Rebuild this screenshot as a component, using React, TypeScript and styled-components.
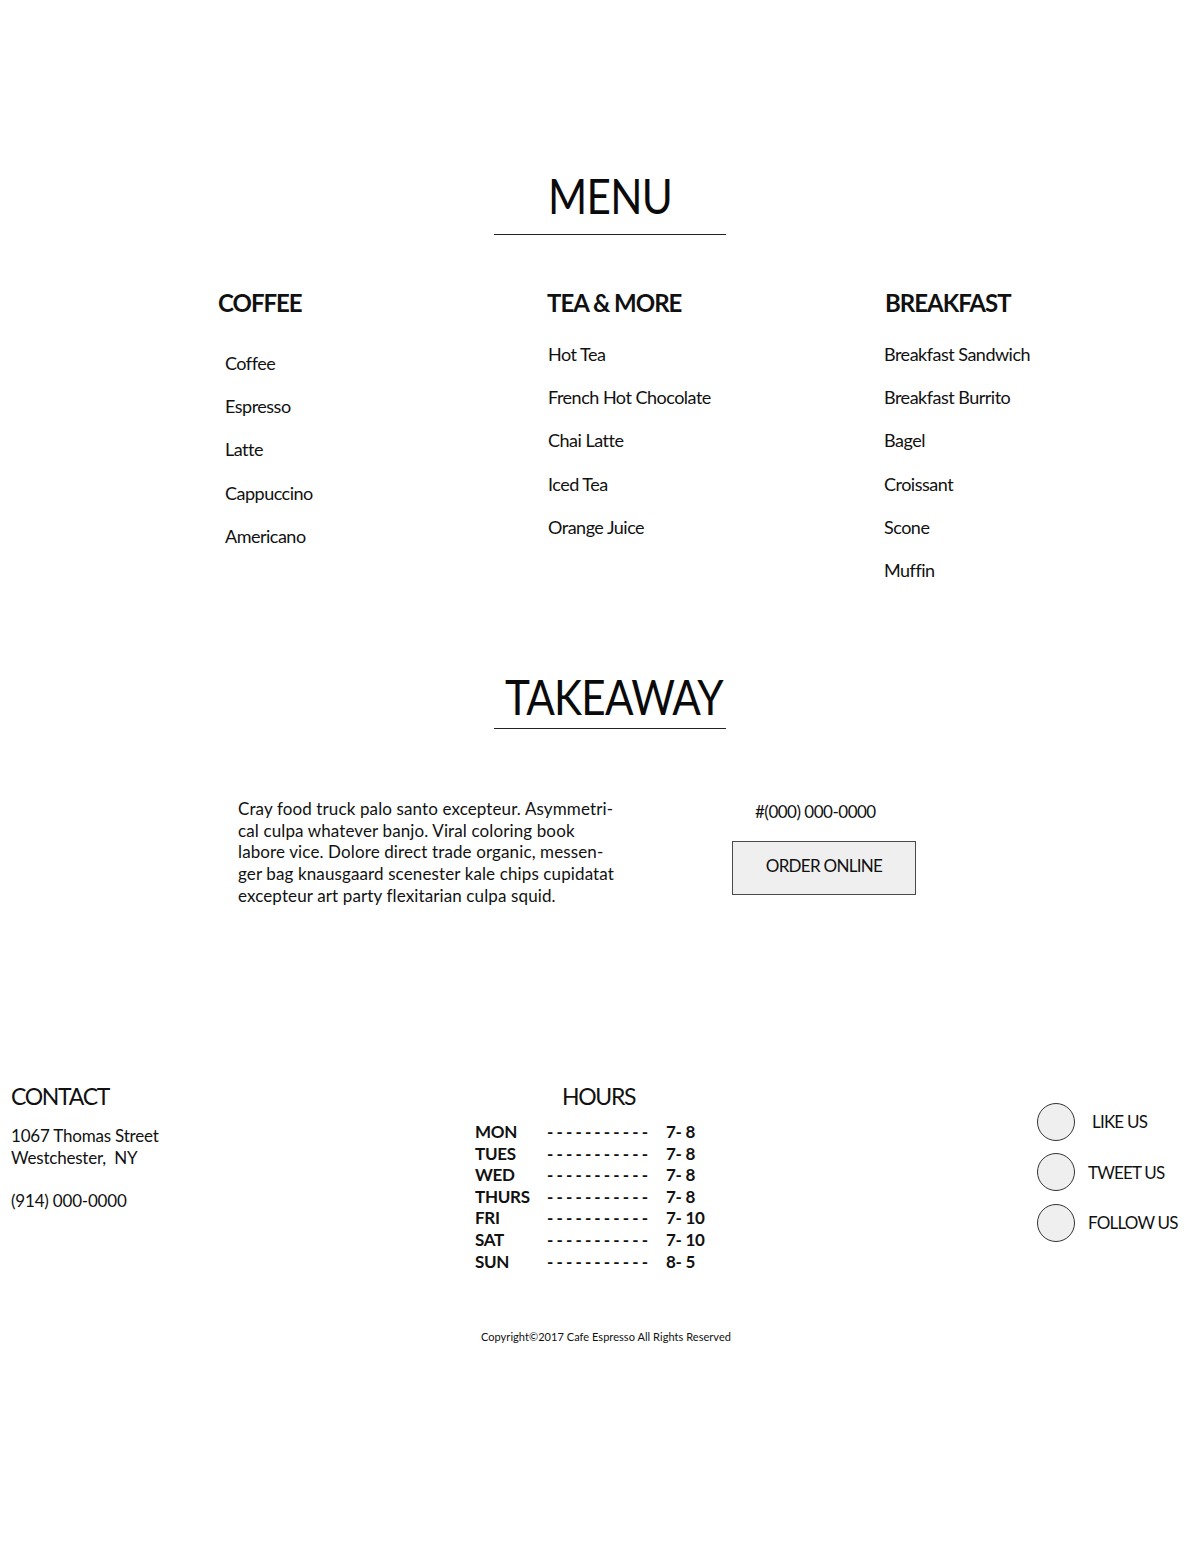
import React from 'react';
import styled, { createGlobalStyle } from 'styled-components';

const GlobalStyle = createGlobalStyle`
  html, body {
    margin: 0;
    padding: 0;
    background: #ffffff;
  }
  body {
    font-family: Lato, "Open Sans", sans-serif;
    color: #111111;
  }
`;

const Page = styled.div`
  width: 1200px;
  min-height: 1546px;
  padding-top: 172px;
  box-sizing: border-box;
  display: flex;
  flex-direction: column;
`;

const TitleBlock = styled.div<{ $top?: number }>`
  margin-left: 494px;
  width: 232px;
  margin-top: ${(p) => p.$top ?? 0}px;
  display: flex;
  flex-direction: column;
`;

// the original face is narrower than Lato, so the big titles get squeezed a bit
const Title = styled.h2<{ $shift?: number }>`
  margin: 0;
  font-size: 48px;
  line-height: 48px;
  font-weight: 400;
  text-align: center;
  letter-spacing: -0.8px;
  color: #0a0a0a;
  transform: translateX(${(p) => p.$shift ?? 0}px) scaleX(0.88);
  white-space: nowrap;
`;

const Rule = styled.div<{ $gap: number }>`
  margin-top: ${(p) => p.$gap}px;
  height: 1px;
  background: #222;
`;

const MenuGrid = styled.div`
  margin-top: 56px;
  padding-left: 218px;
  display: grid;
  grid-template-columns: 329px 338px 1fr;
`;

const Category = styled.div`
  display: flex;
  flex-direction: column;
`;

const CategoryName = styled.h3`
  margin: 0;
  font-size: 24px;
  line-height: 24px;
  font-weight: 700;
  letter-spacing: -1px;
`;

const ItemList = styled.ul<{ $offset: number; $indent: number }>`
  list-style: none;
  margin: ${(p) => p.$offset}px 0 0 ${(p) => p.$indent}px;
  padding: 0;
  display: flex;
  flex-direction: column;
  gap: 25.2px;
`;

const Item = styled.li`
  font-size: 18px;
  line-height: 18px;
  letter-spacing: -0.5px;
`;

const TakeawayBody = styled.div`
  margin-top: 69px;
  padding-left: 238px;
  display: grid;
  grid-template-columns: 494px 184px;
`;

const Blurb = styled.p`
  margin: 0;
  font-size: 17px;
  line-height: 21.75px;
  letter-spacing: 0.12px;
  white-space: nowrap;
`;

const OrderBox = styled.div`
  display: flex;
  flex-direction: column;
  padding-top: 3px;
`;

const Phone = styled.div`
  padding-left: 23px;
  font-size: 17px;
  line-height: 21.75px;
  letter-spacing: -0.5px;
`;

const OrderButton = styled.button`
  margin-top: 18px;
  width: 184px;
  height: 54px;
  box-sizing: border-box;
  border: 1px solid #4a4a4a;
  background: #efefef;
  font-family: Lato, sans-serif;
  font-size: 17px;
  letter-spacing: -0.7px;
  color: #111;
  padding: 0 0 5px;
  cursor: pointer;
`;

const Footer = styled.footer`
  margin-top: 178px;
  padding-left: 11px;
  display: grid;
  grid-template-columns: 464px 562px 1fr;
`;

const FooterHeading = styled.h4<{ $indent?: number }>`
  margin: 0 0 0 ${(p) => p.$indent ?? 0}px;
  font-size: 23px;
  line-height: 23px;
  font-weight: 400;
  letter-spacing: -1.3px;
`;

const ContactLines = styled.div<{ $gap: number }>`
  margin-top: ${(p) => p.$gap}px;
  font-size: 17px;
  line-height: 22px;
  letter-spacing: -0.2px;
`;

const HoursTable = styled.div`
  margin-top: 13px;
  display: grid;
  grid-template-columns: 72px 119px auto;
  grid-auto-rows: 21.6px;
  align-items: center;
  font-size: 17px;
  font-weight: 700;
  letter-spacing: -0.3px;
`;

const Dashes = styled.span`
  letter-spacing: -0.5px;
  white-space: nowrap;
`;

const Social = styled.div`
  padding-top: 18px;
  display: flex;
  flex-direction: column;
  gap: 12.5px;
`;

const SocialRow = styled.div`
  display: flex;
  align-items: center;
`;

const Circle = styled.span`
  width: 38px;
  height: 38px;
  box-sizing: border-box;
  border-radius: 50%;
  border: 1px solid #333;
  background: #efefef;
  flex-shrink: 0;
`;

const SocialLabel = styled.span<{ $gap: number }>`
  margin-left: ${(p) => p.$gap}px;
  font-size: 17px;
  letter-spacing: -0.8px;
  white-space: nowrap;
`;

const Copyright = styled.div`
  margin-top: 59px;
  text-align: center;
  font-size: 11px;
  line-height: 11px;
  padding-left: 12px;
  letter-spacing: 0.05px;
`;

const menu = [
  { name: 'COFFEE', offset: 39, indent: 7, items: ['Coffee', 'Espresso', 'Latte', 'Cappuccino', 'Americano'] },
  { name: 'TEA & MORE', offset: 30, indent: 1, items: ['Hot Tea', 'French Hot Chocolate', 'Chai Latte', 'Iced Tea', 'Orange Juice'] },
  {
    name: 'BREAKFAST',
    offset: 30,
    indent: -1,
    items: ['Breakfast Sandwich', 'Breakfast Burrito', 'Bagel', 'Croissant', 'Scone', 'Muffin'],
  },
];

const hours = [
  ['MON', '7- 8'],
  ['TUES', '7- 8'],
  ['WED', '7- 8'],
  ['THURS', '7- 8'],
  ['FRI', '7- 10'],
  ['SAT', '7- 10'],
  ['SUN', '8- 5'],
];

const social = [
  { label: 'LIKE US', gap: 17 },
  { label: 'TWEET US', gap: 13 },
  { label: 'FOLLOW US', gap: 13 },
];

const App: React.FC = () => {
  return (
    <Page>
      <GlobalStyle />
      <TitleBlock>
        <Title>MENU</Title>
        <Rule $gap={14} />
      </TitleBlock>

      <MenuGrid>
        {menu.map((cat) => (
          <Category key={cat.name}>
            <CategoryName>{cat.name}</CategoryName>
            <ItemList $offset={cat.offset} $indent={cat.indent}>
              {cat.items.map((item) => (
                <Item key={item}>{item}</Item>
              ))}
            </ItemList>
          </Category>
        ))}
      </MenuGrid>

      <TitleBlock $top={94}>
        <Title $shift={-3}>TAKEAWAY</Title>
        <Rule $gap={7} />
      </TitleBlock>

      <TakeawayBody>
        <Blurb>
          Cray food truck palo santo excepteur. Asymmetri-
          <br />
          cal culpa whatever banjo. Viral coloring book
          <br />
          labore vice. Dolore direct trade organic, messen-
          <br />
          ger bag knausgaard scenester kale chips cupidatat
          <br />
          excepteur art party flexitarian culpa squid.
        </Blurb>
        <OrderBox>
          <Phone>#(000) 000-0000</Phone>
          <OrderButton>ORDER ONLINE</OrderButton>
        </OrderBox>
      </TakeawayBody>

      <Footer>
        <div>
          <FooterHeading>CONTACT</FooterHeading>
          <ContactLines $gap={17}>
            1067 Thomas Street
            <br />
            Westchester,&nbsp; NY
          </ContactLines>
          <ContactLines $gap={21}>(914) 000-0000</ContactLines>
        </div>

        <div>
          <FooterHeading $indent={87}>HOURS</FooterHeading>
          <HoursTable>
            {hours.map(([day, time]) => (
              <React.Fragment key={day}>
                <span>{day}</span>
                <Dashes>- - - - - - - - - - -</Dashes>
                <span>{time}</span>
              </React.Fragment>
            ))}
          </HoursTable>
        </div>

        <Social>
          {social.map((s) => (
            <SocialRow key={s.label}>
              <Circle />
              <SocialLabel $gap={s.gap}>{s.label}</SocialLabel>
            </SocialRow>
          ))}
        </Social>
      </Footer>

      <Copyright>Copyright©2017 Cafe Espresso All Rights Reserved</Copyright>
    </Page>
  );
};

export default App;
